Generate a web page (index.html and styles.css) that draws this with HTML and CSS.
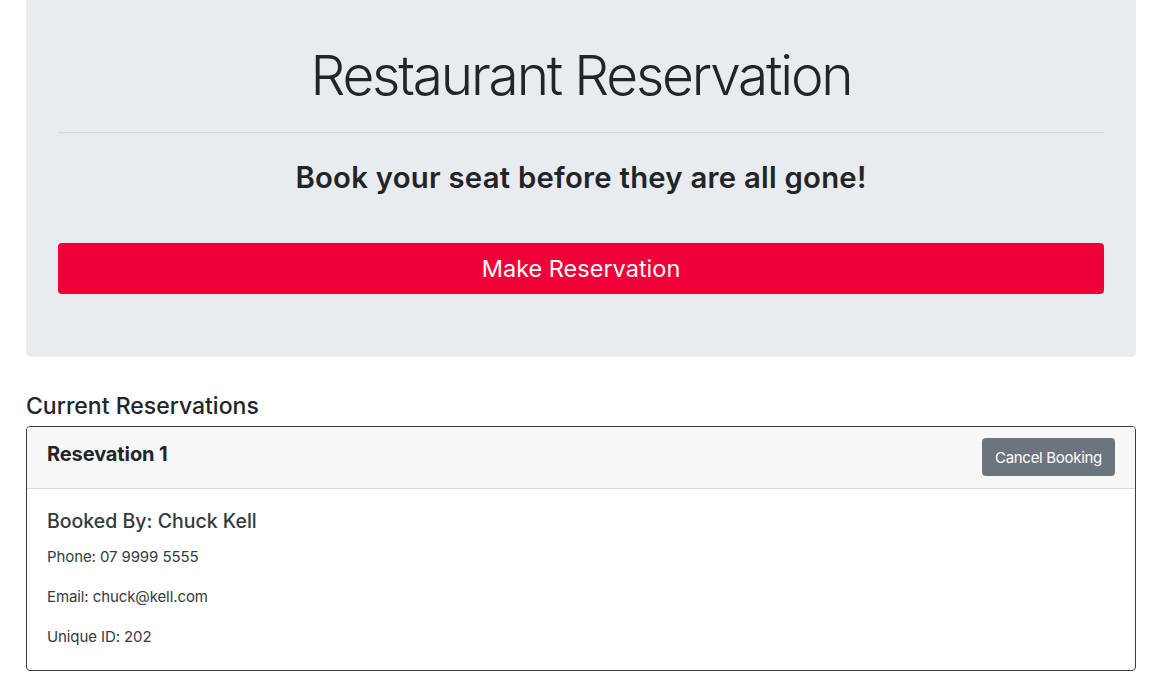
FILE: index.html
```html
<!DOCTYPE html>
<html lang="en">
<head>
<meta charset="utf-8">
<title>Restaurant Reservation</title>
<link rel="stylesheet" href="styles.css">
</head>
<body>
<div class="container">
  <section class="jumbotron">
    <h1 class="title">Restaurant Reservation</h1>
    <hr class="divider">
    <h3 class="lead">Book your seat before they are all gone!</h3>
    <button class="btn-reserve" type="button">Make Reservation</button>
  </section>

  <h4 class="section-title">Current Reservations</h4>
  <div class="card">
    <div class="card-header">
      <h5 class="card-header-title">Resevation 1</h5>
      <button class="btn-cancel" type="button">Cancel Booking</button>
    </div>
    <div class="card-body">
      <h5 class="card-title">Booked By: Chuck Kell</h5>
      <p class="card-text">Phone: 07 9999 5555</p>
      <p class="card-text">Email: chuck@kell.com</p>
      <p class="card-text last">Unique ID: 202</p>
    </div>
  </div>
</div>
</body>
</html>
```

FILE: styles.css
```css
html, body {
  margin: 0;
  padding: 0;
  background: #ffffff;
}

body {
  font-family: Inter, "Noto Sans", "Liberation Sans", sans-serif;
  color: #212529;
  font-size: 16px;
  line-height: 1.5;
}

.container {
  width: 1110px;
  margin-left: 26px;
}

.jumbotron {
  background: #e9ecef;
  border-radius: 0 0 5px 5px;
  padding: 42px 32px 63px;
  text-align: center;
}

.title {
  margin: 0;
  font-size: 55px;
  font-weight: 300;
  line-height: 66px;
  letter-spacing: -2.2px;
  color: #212529;
}

.divider {
  margin: 24px 0 0;
  border: 0;
  border-top: 1px solid #d4d8dc;
}

.lead {
  margin: 27px 0 0;
  font-size: 29.3px;
  font-weight: 600;
  line-height: 35px;
  letter-spacing: 0.25px;
}

.btn-reserve {
  display: block;
  width: 100%;
  margin-top: 48px;
  height: 51px;
  border: 0;
  border-radius: 4px;
  background: #ef0036;
  color: #ffffff;
  font-family: inherit;
  font-size: 23.5px;
  font-weight: 400;
  letter-spacing: 0;
}

.section-title {
  margin: 35px 0 6px;
  font-size: 23px;
  font-weight: 500;
  line-height: 28px;
  letter-spacing: 0;
}

.card {
  border: 1px solid #343a40;
  border-radius: 4px;
  overflow: hidden;
}

.card-header {
  display: flex;
  align-items: center;
  justify-content: space-between;
  padding: 11px 20px 12px;
  height: 38px;
  background: #f7f7f7;
  border-bottom: 1px solid #dcdcdc;
}

.card-header-title {
  margin: 0;
  font-size: 20px;
  font-weight: 700;
  line-height: 28px;
  letter-spacing: -0.1px;
  position: relative;
  top: -3px;
}

.btn-cancel {
  height: 38px;
  width: 133px;
  padding: 0;
  border: 0;
  border-radius: 4px;
  background: #6c757d;
  color: #ffffff;
  font-family: inherit;
  font-size: 15px;
  letter-spacing: -0.3px;
}

.card-body {
  padding: 20px 20px 21px;
  color: #343a40;
}

.card-title {
  margin: 0 0 12px;
  font-size: 19.5px;
  font-weight: 500;
  line-height: 24px;
}

.card-text {
  margin: 0 0 16px;
  font-size: 15px;
  line-height: 24px;
  letter-spacing: -0.1px;
}

.card-text.last {
  margin-bottom: 0;
}
```
